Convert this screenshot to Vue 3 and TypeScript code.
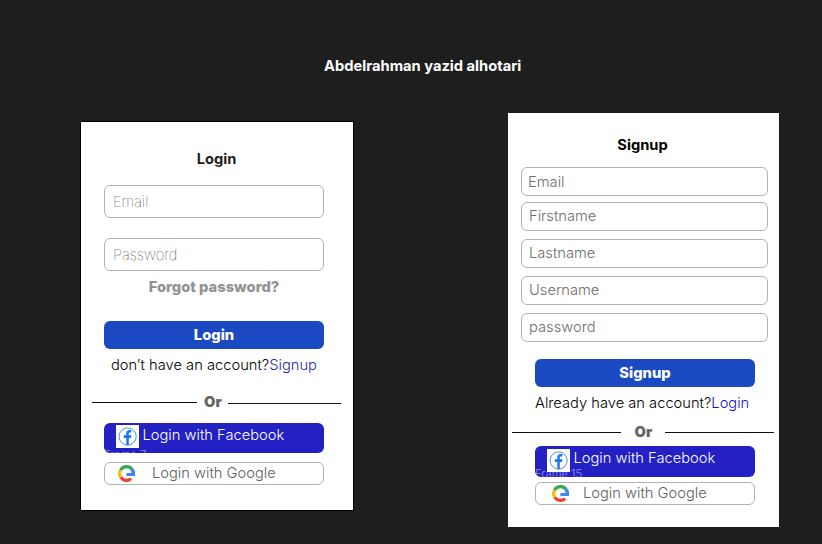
<script setup lang="ts">
import { defineComponent, h } from 'vue'

const signupFields: string[] = ['Email', 'Firstname', 'Lastname', 'Username', 'password']

const FacebookIcon = defineComponent({
  render: () =>
    h('svg', { width: 23, height: 23, viewBox: '0 0 23 23' }, [
      h('rect', { width: 23, height: 23, fill: '#fff' }),
      h('circle', { cx: 11.6, cy: 11.5, r: 8.6, fill: 'none', stroke: '#2b83f3', 'stroke-width': 0.9 }),
      h('path', {
        d: 'M10.3 20V13H7.8V10.3H10.3V8.6C10.3 6.1 11.7 5.1 13.5 5.1C14.4 5.1 15 5.2 15.3 5.3V7.6H14.1C13 7.6 12.8 8.2 12.8 9V10.3H15.4L15 13H12.8V20Z',
        fill: '#1877f2',
      }),
    ]),
})

const GoogleIcon = defineComponent({
  render: () =>
    h('svg', { width: 17, height: 17, viewBox: '0 0 17 17', fill: 'none', 'stroke-width': 3.2 }, [
      h('path', { d: 'M2.5 5.2A6.9 6.9 0 0 1 14 4.3', stroke: '#34a853' }),
      h('path', { d: 'M2.8 12.4A6.9 6.9 0 0 1 2.5 5.2', stroke: '#fbbc05' }),
      h('path', { d: 'M13.2 13.6A6.9 6.9 0 0 1 2.8 12.4', stroke: '#ea4335' }),
      h('path', { d: 'M15.2 3.3A8.6 8.6 0 0 1 17 10.9H8.4V8H13.5A5.4 5.4 0 0 0 12.5 5.1Z', fill: '#4285f4', stroke: 'none' }),
    ]),
})
</script>

<template>
  <main class="canvas">
    <h1 class="author">Abdelrahman yazid alhotari</h1>
    <div class="frames">
      <section class="card login">
        <h2 class="title"><span>Login</span></h2>
        <div class="field"><span>Email</span></div>
        <div class="field second"><span>Password</span></div>
        <p class="forgot"><span>Forgot password?</span></p>
        <button class="submit"><span>Login</span></button>
        <p class="switch"><span>don’t have an account?</span><a>Signup</a></p>
        <div class="divider"><i></i><b>Or</b><i class="right"></i></div>
        <button class="facebook">
          <FacebookIcon class="fb-icon" /><span>Login with Facebook</span>
          <small>Frame 7</small>
        </button>
        <button class="google"><GoogleIcon class="g-icon" /><span>Login with Google</span></button>
      </section>

      <section class="card signup">
        <h2 class="title"><span>Signup</span></h2>
        <div class="fields">
          <div v-for="name in signupFields" :key="name" class="field"><span>{{ name }}</span></div>
        </div>
        <button class="submit"><span>Signup</span></button>
        <p class="switch"><span>Already have an account?</span><a>Login</a></p>
        <div class="divider"><i></i><b>Or</b><i class="right"></i></div>
        <button class="facebook">
          <FacebookIcon class="fb-icon" /><span>Login with Facebook</span>
          <small>Frame 15</small>
        </button>
        <button class="google"><GoogleIcon class="g-icon" /><span>Login with Google</span></button>
      </section>
    </div>
  </main>
</template>

<style>
body {
  background: #1e1e1e;
}
</style>

<style scoped>
* {
  box-sizing: border-box;
  margin: 0;
}
.canvas {
  width: 822px;
  height: 544px;
  overflow: hidden;
  background: #1e1e1e;
  font-family: Inter, "Liberation Sans", sans-serif;
  font-size: 14.7px;
  font-weight: 300;
  line-height: 18px;
  white-space: nowrap;
}
.author {
  height: 75px;
  padding: 57px 0 0 324px;
  font-size: 14.7px;
  font-weight: 700;
  color: #fff;
}
.frames {
  display: flex;
  justify-content: space-between;
  align-items: flex-start;
  padding: 38px 43px 0 80px;
}
.card {
  display: flex;
  flex-direction: column;
  background: #fff;
}
.login {
  width: 274px;
  height: 390px;
  margin-top: 8px;
  padding: 0 11px;
  border: 1px solid #000;
}
.signup {
  width: 271px;
  height: 414px;
  padding: 0 4px;
}
.title {
  font-size: 14.7px;
  font-weight: 700;
  text-align: center;
}
.login .title {
  margin-top: 28px;
  padding-right: 1px;
  color: #1e1e1e;
}
.signup .title {
  margin-top: 23px;
  padding-right: 2px;
  color: #000;
}
.field {
  display: flex;
  align-items: center;
  border: 1px solid #b3b3b3;
  border-radius: 6px;
  color: #6e6e6e;
}
.login .field {
  height: 33px;
  margin: 17px 18px 0 12px;
  padding-left: 8px;
  font-weight: 100;
  color: #000;
}
.login .second {
  margin-top: 20px;
}
.fields {
  display: flex;
  flex-direction: column;
  gap: 8px;
  margin: 13px 7px 0 9px;
}
.signup .field {
  height: 29px;
  padding-left: 7px;
}
.signup .field span {
  margin-top: -1px;
}
.signup .field:first-child {
  margin-bottom: -2px;
  padding-left: 6px;
}
.signup .field:first-child span {
  margin-top: 1px;
}
.forgot {
  margin: 7px 6px 0 0;
  font-weight: 800;
  color: #929292;
  text-align: center;
}
button {
  display: flex;
  width: 220px;
  flex: none;
  padding: 0;
  border: 0;
  border-radius: 6px;
  font: inherit;
}
.login button {
  margin-left: 12px;
}
.signup button {
  margin-left: 23px;
}
.submit {
  height: 28px;
  align-items: center;
  justify-content: center;
  background: #1b49c2;
  font-weight: 800;
  color: #fff;
}
.login .submit {
  margin-top: 25px;
}
.signup .submit {
  margin-top: 17px;
}
.switch {
  display: flex;
  color: #000;
}
.login .switch {
  margin: 7px 0 0 19px;
}
.signup .switch {
  margin: 7px 0 0 23px;
}
.switch a {
  color: #2b29b0;
}
.signup .switch a {
  color: #1512c4;
}
.divider {
  display: flex;
  align-items: center;
  height: 18px;
}
.divider i {
  width: 105px;
  height: 1px;
  background: #111;
}
.divider b {
  width: 31px;
  padding-left: 1px;
  font-weight: 900;
  text-align: center;
  color: #666;
}
.divider .right {
  width: 113px;
  margin-top: 2px;
}
.login .divider {
  margin-top: 19px;
}
.signup .divider {
  margin-top: 11px;
}
.signup .divider i {
  width: 109px;
  margin-top: 1px;
}
.signup .divider b {
  width: 44px;
}
.facebook {
  position: relative;
  height: 30px;
  overflow: hidden;
  background: #2320c4;
  color: #fff;
}
.signup .facebook {
  height: 31px;
}
.login .facebook {
  margin-top: 12px;
}
.signup .facebook {
  margin-top: 5px;
}
.fb-icon {
  margin: 2px 3.5px 0 12px;
}
.facebook span {
  margin-top: 3px;
}
.facebook small {
  position: absolute;
  left: 0;
  bottom: -9px;
  font-size: 11.1px;
  font-weight: 400;
  line-height: 14px;
  color: rgba(255, 255, 255, 0.42);
}
.signup .fb-icon {
  margin-top: 3px;
}
.signup .facebook small {
  bottom: -4px;
}
button.google {
  height: 23px;
  align-items: center;
  border: 1px solid #b3b3b3;
  background: #fff;
  color: #606060;
}
.google span {
  margin-top: -1px;
}
.login .google {
  margin-top: 9px;
}
.signup .google {
  margin-top: 5px;
}
.g-icon {
  margin: 0 17px 0 13px;
}
.signup .g-icon {
  margin: 0 14px 0 16px;
}
</style>
